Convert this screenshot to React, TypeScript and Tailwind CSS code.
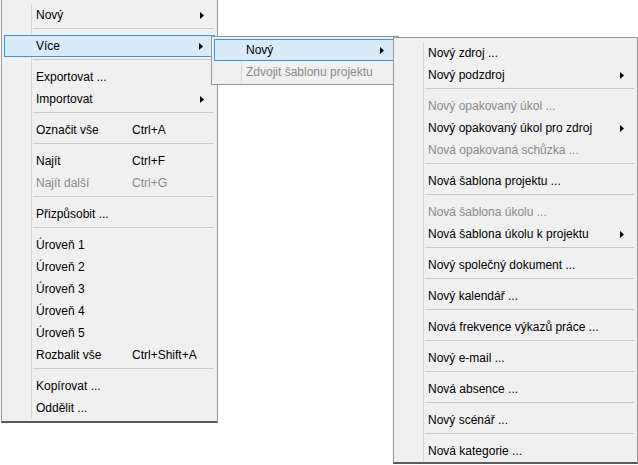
import { ReactNode } from 'react';

type Item =
  | 'sep'
  | {
      label: string;
      shortcut?: string;
      sub?: boolean;
      disabled?: boolean;
      active?: boolean;
    };

const mainItems: Item[] = [
  { label: 'Nový', sub: true },
  'sep',
  { label: 'Více', sub: true, active: true },
  'sep',
  { label: 'Exportovat ...' },
  { label: 'Importovat', sub: true },
  'sep',
  { label: 'Označit vše', shortcut: 'Ctrl+A' },
  'sep',
  { label: 'Najít', shortcut: 'Ctrl+F' },
  { label: 'Najít další', shortcut: 'Ctrl+G', disabled: true },
  'sep',
  { label: 'Přizpůsobit ...' },
  'sep',
  { label: 'Úroveň 1' },
  { label: 'Úroveň 2' },
  { label: 'Úroveň 3' },
  { label: 'Úroveň 4' },
  { label: 'Úroveň 5' },
  { label: 'Rozbalit vše', shortcut: 'Ctrl+Shift+A' },
  'sep',
  { label: 'Kopírovat ...' },
  { label: 'Oddělit ...' },
];

const moreItems: Item[] = [
  { label: 'Nový', sub: true, active: true },
  { label: 'Zdvojit šablonu projektu', disabled: true },
];

const newItems: Item[] = [
  { label: 'Nový zdroj ...' },
  { label: 'Nový podzdroj', sub: true },
  'sep',
  { label: 'Nový opakovaný úkol ...', disabled: true },
  { label: 'Nový opakovaný úkol pro zdroj', sub: true },
  { label: 'Nová opakovaná schůzka ...', disabled: true },
  'sep',
  { label: 'Nová šablona projektu ...' },
  'sep',
  { label: 'Nová šablona úkolu ...', disabled: true },
  { label: 'Nová šablona úkolu k projektu', sub: true },
  'sep',
  { label: 'Nový společný dokument ...' },
  'sep',
  { label: 'Nový kalendář ...' },
  'sep',
  { label: 'Nová frekvence výkazů práce ...' },
  'sep',
  { label: 'Nový e-mail ...' },
  'sep',
  { label: 'Nová absence ...' },
  'sep',
  { label: 'Nový scénář ...' },
  'sep',
  { label: 'Nová kategorie ...' },
];

const Arrow = () => (
  <svg width="4" height="7" viewBox="0 0 4 7" className="ml-auto mr-[11px] shrink-0">
    <polygon points="0,0 4,3.5 0,7" fill="#000" />
  </svg>
);

const MenuRow = ({ item }: { item: Item }) => {
  if (item === 'sep') {
    return (
      <div className="flex h-[9px]">
        <div className="w-[27px] shrink-0" />
        <div className="flex-1 border-l border-[#d7d7d7] pt-[2px] pl-[1px] pr-[1px]">
          <div className="h-px bg-[#c9c9c9]" />
        </div>
      </div>
    );
  }
  const text = item.disabled ? 'text-[#8a8a8a]' : 'text-black';
  const content: ReactNode = (
    <>
      <span className={item.shortcut ? 'w-[96px] shrink-0 whitespace-nowrap' : 'whitespace-nowrap'}>{item.label}</span>
      {item.shortcut && <span className="whitespace-nowrap">{item.shortcut}</span>}
      {item.sub && <Arrow />}
    </>
  );
  if (item.active) {
    return (
      <div className={`flex h-[22px] border border-[#2e9ce0] bg-[#d9eafa] ${text}`}>
        <div className="w-[26px] shrink-0" />
        <div className="flex flex-1 items-center border-l border-transparent pl-[4px]">{content}</div>
      </div>
    );
  }
  return (
    <div className={`flex h-[22px] ${text}`}>
      <div className="w-[27px] shrink-0" />
      <div className="flex flex-1 items-center border-l border-[#d7d7d7] pl-[4px]">{content}</div>
    </div>
  );
};

const Menu = ({ items, className }: { items: Item[]; className: string }) => (
  <div className={`absolute flex flex-col border border-[#979797] bg-[#f0f0f0] px-[2px] ${className}`}>
    {items.map((item, i) => (
      <MenuRow key={i} item={item} />
    ))}
  </div>
);

export default function App() {
  return (
    <div
      className="relative h-[465px] w-[638px] overflow-hidden bg-white text-[12px] leading-none"
      style={{ fontFamily: '"Liberation Sans", Arial, sans-serif' }}
    >
      <Menu items={mainItems} className="left-[1px] top-[-1px] w-[217px] pt-[4px] pb-[2px] border-b-2 border-b-[#5a5a5a]" />
      <Menu items={moreItems} className="left-[211px] top-[36px] w-[188px] pt-[2px] pb-[1px]" />
      <Menu items={newItems} className="left-[393px] top-[37px] w-[245px] pt-[4px] border-b-2 border-b-[#5a5a5a]" />
    </div>
  );
}
